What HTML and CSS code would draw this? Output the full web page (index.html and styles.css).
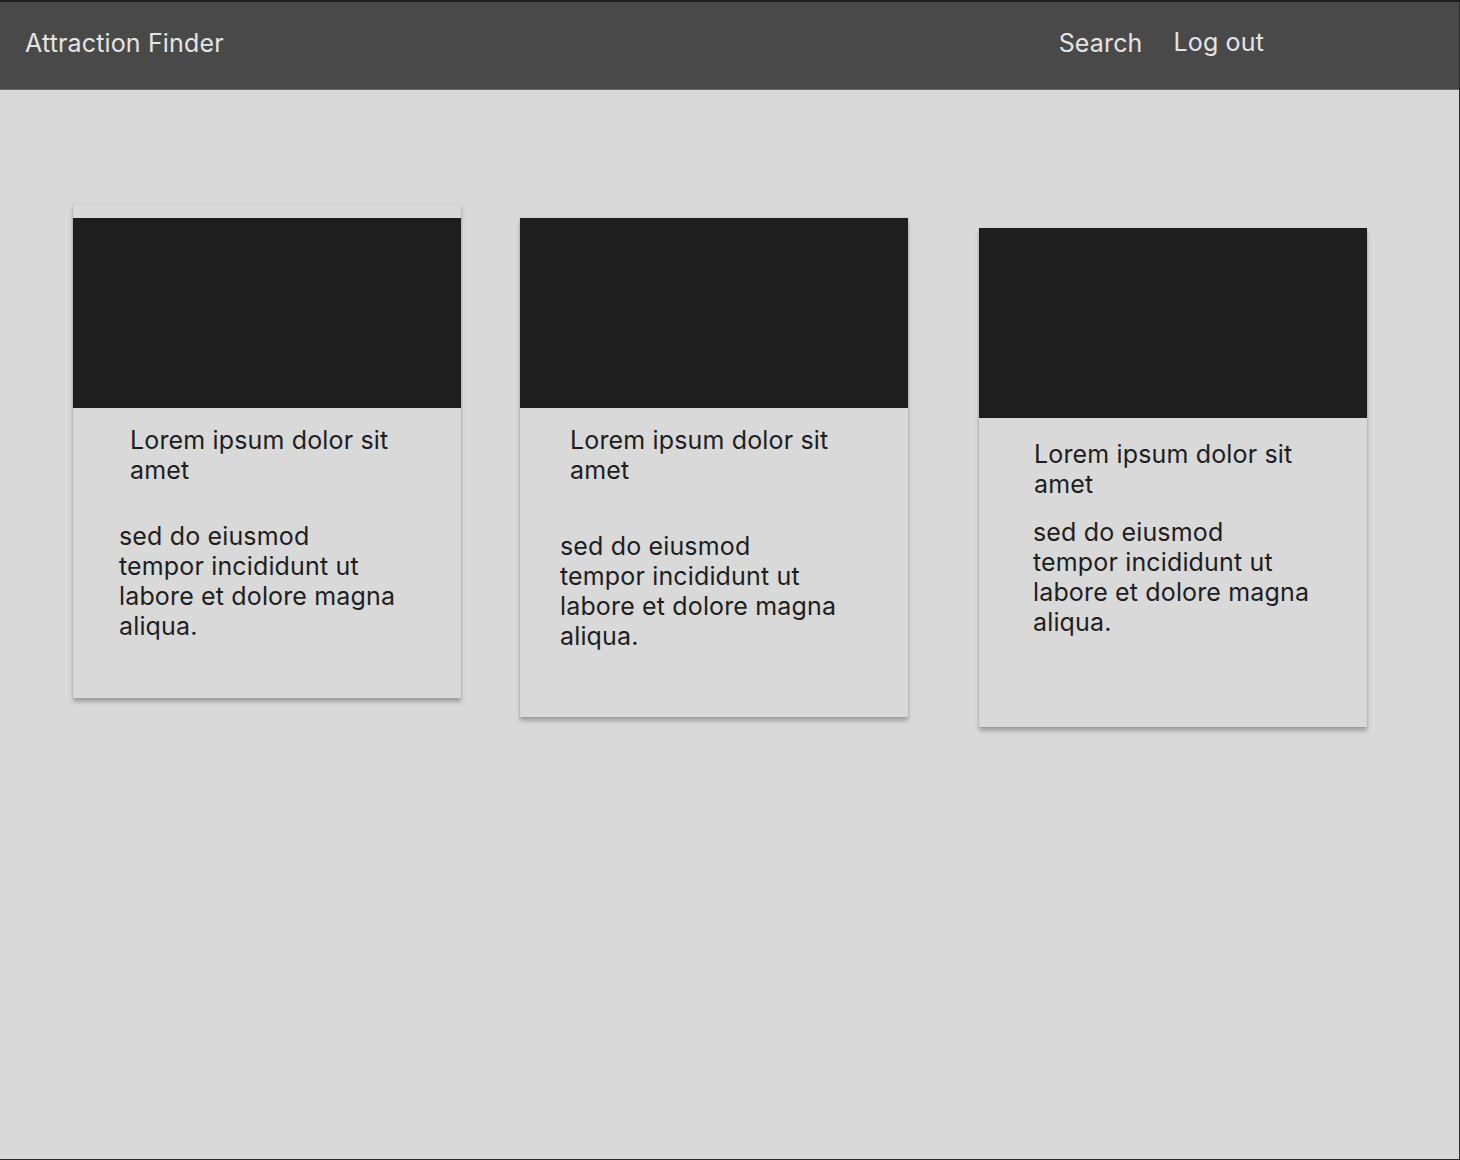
FILE: index.html
```html
<!DOCTYPE html>
<html lang="en">
<head>
<meta charset="utf-8">
<title>Attraction Finder</title>
<link rel="stylesheet" href="styles.css">
</head>
<body>
<div class="frame">
  <header class="topbar">
    <div class="brand">Attraction Finder</div>
    <nav class="nav">
      <a class="nav-link">Search</a>
      <a class="nav-link nav-link--logout">Log out</a>
    </nav>
  </header>
  <main class="cards">
    <article class="card card--one">
      <div class="card-image"></div>
      <h2 class="card-title">Lorem ipsum dolor sit<br>amet</h2>
      <p class="card-text">sed do eiusmod<br>tempor incididunt ut<br>labore et dolore magna<br>aliqua.</p>
    </article>
    <article class="card card--two">
      <div class="card-image"></div>
      <h2 class="card-title">Lorem ipsum dolor sit<br>amet</h2>
      <p class="card-text">sed do eiusmod<br>tempor incididunt ut<br>labore et dolore magna<br>aliqua.</p>
    </article>
    <article class="card card--three">
      <div class="card-image"></div>
      <h2 class="card-title">Lorem ipsum dolor sit<br>amet</h2>
      <p class="card-text">sed do eiusmod<br>tempor incididunt ut<br>labore et dolore magna<br>aliqua.</p>
    </article>
  </main>
</div>
</body>
</html>
```
FILE: styles.css
```css
* { box-sizing: border-box; }
html, body { margin: 0; padding: 0; }
body {
  background: #d9d9d9;
  font-family: Inter, "Noto Sans", sans-serif;
  color: #1e1e1e;
}
.frame {
  width: 1460px;
  height: 1160px;
  border-top: 2px solid #1e1e1e;
  border-right: 1px solid #2c2c2c;
  border-bottom: 1px solid #2c2c2c;
  background: #d9d9d9;
  overflow: hidden;
}
.topbar {
  height: 88px;
  background: #4a494a;
  border-bottom: 1px solid #6a6a6a;
  display: flex;
  align-items: center;
  justify-content: space-between;
  padding: 0 0 6px 25px;
  color: #e4e4e4;
}
.brand {
  font-size: 25px;
  letter-spacing: 0.15px;
}
.nav {
  display: flex;
  gap: 31px;
  margin-right: 195px;
}
.nav-link {
  font-size: 25px;
  letter-spacing: 0.15px;
  color: #e4e4e4;
}
.nav-link--logout { position: relative; top: -1px; }
.cards {
  display: flex;
  align-items: flex-start;
  padding: 114px 0 0 73px;
}
.card {
  width: 388px;
  background: #d9d9d9;
  box-shadow: 0 0 0 1px rgba(0, 0, 0, 0.04), 0 4px 4px rgba(0, 0, 0, 0.25);
  display: flex;
  flex-direction: column;
}
.card-image {
  height: 190px;
  background: #1e1e1e;
}
.card-title {
  margin: 0;
  font-size: 25px;
  letter-spacing: 0.15px;
  font-weight: 400;
  line-height: 30px;
}
.card-text {
  margin: 0;
  font-size: 25px;
  letter-spacing: 0.15px;
  line-height: 30px;
}
.card--one {
  height: 494px;
  padding-top: 14px;
}
.card--one .card-title { padding: 17px 0 0 57px; }
.card--one .card-text { padding: 36px 0 0 46px; }
.card--two {
  height: 499px;
  margin-top: 14px;
  margin-left: 59px;
}
.card--two .card-title { padding: 17px 0 0 50px; }
.card--two .card-text { padding: 46px 0 0 40px; }
.card--three {
  height: 499px;
  margin-top: 24px;
  margin-left: 71px;
}
.card--three .card-title { padding: 21px 0 0 55px; }
.card--three .card-text { padding: 18px 0 0 54px; }
```
